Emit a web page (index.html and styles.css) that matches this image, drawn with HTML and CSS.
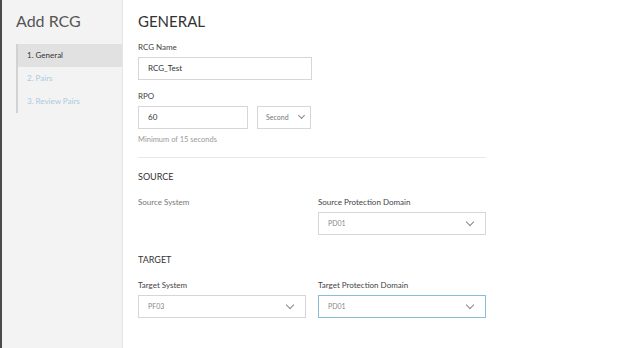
FILE: index.html
```html
<!DOCTYPE html>
<html>
<head>
    <title>Add RCG</title>
    <link rel="stylesheet" href="styles.css">
</head>
<body>

<div class="wizard">
    <div class="sidebar">
        <h2 class="wizard-title">Add RCG</h2>
        <ul class="steps">
            <li class="step active">1. General</li>
            <li class="step">2. Pairs</li>
            <li class="step">3. Review Pairs</li>
        </ul>
    </div>

    <div class="content">
        <h1>GENERAL</h1>

        <label class="field-label">RCG Name</label>
        <div class="input name-input">RCG_Test</div>

        <label class="field-label">RPO</label>
        <div class="rpo-row">
            <div class="input rpo-input">60</div>
            <div class="input unit-select">Second <span class="caret small"></span></div>
        </div>
        <div class="hint">Minimum of 15 seconds</div>

        <div class="divider"></div>

        <h3 class="section">SOURCE</h3>
        <div class="pair-row">
            <div class="col">
                <label class="field-label muted">Source System</label>
            </div>
            <div class="col">
                <label class="field-label">Source Protection Domain</label>
                <div class="input select">PD01 <span class="caret"></span></div>
            </div>
        </div>

        <h3 class="section target">TARGET</h3>
        <div class="pair-row">
            <div class="col">
                <label class="field-label">Target System</label>
                <div class="input select short">PF03 <span class="caret"></span></div>
            </div>
            <div class="col">
                <label class="field-label">Target Protection Domain</label>
                <div class="input select focused">PD01 <span class="caret"></span></div>
            </div>
        </div>
    </div>
</div>

</body>
</html>
```

FILE: styles.css
```css
body {
    font-family: Lato, "Open Sans", sans-serif;
    margin: 0;
    padding: 0;
    background-color: #fff;
    color: #333;
}
.wizard {
    display: flex;
    height: 348px;
    border-left: 2px solid #4a4a4a;
}
.sidebar {
    width: 120px;
    background-color: #f3f3f3;
    border-right: 1px solid #e6e6e6;
    padding-top: 12px;
}
.wizard-title {
    margin: 0 0 14px 14px;
    font-size: 16px;
    font-weight: normal;
    color: #555;
    line-height: 18px;
}
.steps {
    list-style: none;
    margin: 0 0 0 14px;
    padding: 0;
    border-left: 2px solid #d2d2d2;
}
.step {
    height: 23px;
    line-height: 23px;
    padding-left: 9px;
    font-size: 8px;
    color: #a9cbe0;
}
.step.active {
    background-color: #e1e1e1;
    color: #333;
}
.content {
    padding: 12px 0 0 15px;
    width: 348px;
}
h1 {
    margin: 0 0 12px 0;
    font-size: 15px;
    font-weight: normal;
    line-height: 18px;
    color: #333;
}
.field-label {
    display: block;
    font-size: 8px;
    line-height: 10px;
    color: #444;
    margin-bottom: 5px;
}
.field-label.muted {
    color: #777;
}
.input {
    box-sizing: border-box;
    height: 23px;
    line-height: 21px;
    border: 1px solid #d6d6d6;
    padding-left: 9px;
    font-size: 8px;
    color: #333;
    position: relative;
}
.name-input {
    width: 174px;
    margin-bottom: 11px;
}
.rpo-row {
    display: flex;
    gap: 9px;
}
.rpo-input {
    width: 110px;
}
.unit-select {
    width: 54px;
    color: #777;
    font-size: 7px;
    padding-left: 8px;
}
.hint {
    font-size: 7.5px;
    color: #9a9a9a;
    margin-top: 6px;
}
.divider {
    border-top: 1px solid #e8e8e8;
    margin-top: 13px;
}
.section {
    margin: 14px 0 15px 0;
    font-size: 9px;
    font-weight: normal;
    line-height: 10px;
    color: #333;
}
.section.target {
    margin-top: 20px;
}
.pair-row {
    display: flex;
    gap: 12px;
}
.col {
    width: 168px;
}
.select {
    color: #888;
    font-size: 7px;
}
.select.focused {
    border-color: #8bbcd8;
}
.caret {
    position: absolute;
    right: 12px;
    top: 6px;
    width: 5px;
    height: 5px;
    border-right: 1px solid #888;
    border-bottom: 1px solid #888;
    transform: rotate(45deg);
}
.caret.small {
    right: 6px;
    top: 6px;
    width: 4px;
    height: 4px;
}
```
